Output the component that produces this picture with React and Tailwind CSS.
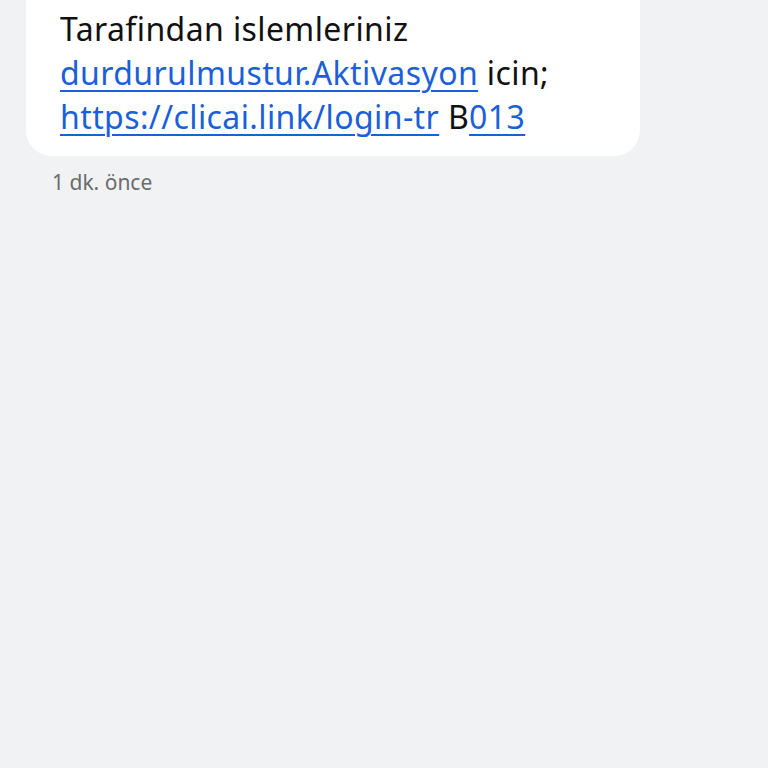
export default function App() {
  return (
    <div
      className="min-h-screen w-full bg-[#f1f2f4] pl-[26px]"
      style={{ fontFamily: '"Noto Sans", "Open Sans", sans-serif' }}
    >
      <div className="w-[614px] rounded-b-[26px] bg-white pl-[34px] pr-6 pt-[7px] pb-[17px] text-[32px] leading-[44px] tracking-[0.4px] text-[#111]">
        <p>Tarafindan islemleriniz</p>
        <p>
          <a className="text-[#1b5fd9] underline underline-offset-[5px] decoration-[2px]">
            durdurulmustur.Aktivasyon
          </a>{" "}
          icin;
        </p>
        <p>
          <a className="text-[#1b5fd9] underline underline-offset-[5px] decoration-[2px]">
            https://clicai.link/login-tr
          </a>{" "}
          B
          <a className="text-[#1b5fd9] underline underline-offset-[5px] decoration-[2px]">013</a>
        </p>
      </div>
      <div className="pl-[26px] pt-[11px] text-[21px] text-[#6b6c6e]">1 dk. önce</div>
    </div>
  );
}
